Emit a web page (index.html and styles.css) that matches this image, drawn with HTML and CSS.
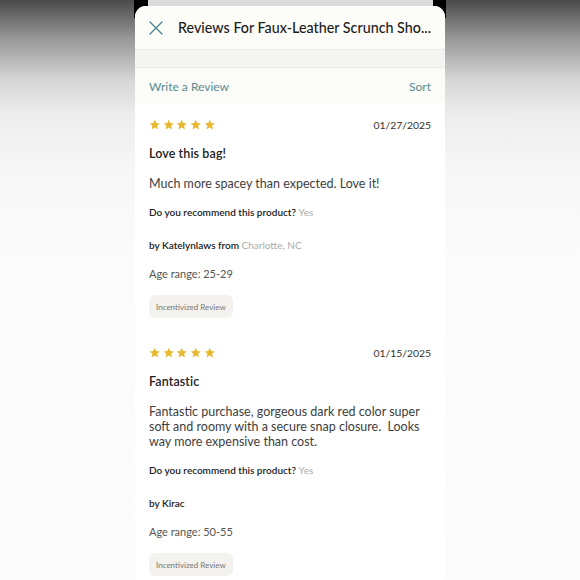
FILE: index.html
```html
<!DOCTYPE html>
<html lang="en">
<head>
<meta charset="utf-8">
<title>Reviews</title>
<link rel="stylesheet" href="styles.css">
</head>
<body>
<div class="device">
  <div class="notch"><div class="notch-card"></div></div>
  <div class="sheet">
    <header class="sheet-header">
      <svg class="close" viewBox="0 0 14 14" width="14" height="14" aria-hidden="true">
        <path d="M1 1 L13 13 M13 1 L1 13" stroke="#4f8790" stroke-width="1.4" fill="none" stroke-linecap="round"/>
      </svg>
      <h1 class="sheet-title">Reviews For Faux-Leather Scrunch Sho...</h1>
    </header>
    <div class="band"></div>
    <div class="toolbar">
      <span class="link">Write a Review</span>
      <span class="link">Sort</span>
    </div>

    <article class="review">
      <div class="review-top">
        <div class="stars">
          <svg viewBox="0 0 24 24"><path d="M12 1.5l3.1 7.1 7.6.6-5.8 5 1.8 7.5L12 17.7l-6.7 4 1.8-7.5-5.8-5 7.6-.6z"/></svg>
          <svg viewBox="0 0 24 24"><path d="M12 1.5l3.1 7.1 7.6.6-5.8 5 1.8 7.5L12 17.7l-6.7 4 1.8-7.5-5.8-5 7.6-.6z"/></svg>
          <svg viewBox="0 0 24 24"><path d="M12 1.5l3.1 7.1 7.6.6-5.8 5 1.8 7.5L12 17.7l-6.7 4 1.8-7.5-5.8-5 7.6-.6z"/></svg>
          <svg viewBox="0 0 24 24"><path d="M12 1.5l3.1 7.1 7.6.6-5.8 5 1.8 7.5L12 17.7l-6.7 4 1.8-7.5-5.8-5 7.6-.6z"/></svg>
          <svg viewBox="0 0 24 24"><path d="M12 1.5l3.1 7.1 7.6.6-5.8 5 1.8 7.5L12 17.7l-6.7 4 1.8-7.5-5.8-5 7.6-.6z"/></svg>
        </div>
        <span class="date">01/27/2025</span>
      </div>
      <h2 class="review-title">Love this bag!</h2>
      <p class="review-body">Much more spacey than expected. Love it!</p>
      <p class="recommend">Do you recommend this product? <span class="muted">Yes</span></p>
      <p class="author">by Katelynlaws from <span class="muted">Charlotte, NC</span></p>
      <p class="age">Age range: 25-29</p>
      <span class="badge">Incentivized Review</span>
    </article>

    <article class="review">
      <div class="review-top">
        <div class="stars">
          <svg viewBox="0 0 24 24"><path d="M12 1.5l3.1 7.1 7.6.6-5.8 5 1.8 7.5L12 17.7l-6.7 4 1.8-7.5-5.8-5 7.6-.6z"/></svg>
          <svg viewBox="0 0 24 24"><path d="M12 1.5l3.1 7.1 7.6.6-5.8 5 1.8 7.5L12 17.7l-6.7 4 1.8-7.5-5.8-5 7.6-.6z"/></svg>
          <svg viewBox="0 0 24 24"><path d="M12 1.5l3.1 7.1 7.6.6-5.8 5 1.8 7.5L12 17.7l-6.7 4 1.8-7.5-5.8-5 7.6-.6z"/></svg>
          <svg viewBox="0 0 24 24"><path d="M12 1.5l3.1 7.1 7.6.6-5.8 5 1.8 7.5L12 17.7l-6.7 4 1.8-7.5-5.8-5 7.6-.6z"/></svg>
          <svg viewBox="0 0 24 24"><path d="M12 1.5l3.1 7.1 7.6.6-5.8 5 1.8 7.5L12 17.7l-6.7 4 1.8-7.5-5.8-5 7.6-.6z"/></svg>
        </div>
        <span class="date">01/15/2025</span>
      </div>
      <h2 class="review-title">Fantastic</h2>
      <p class="review-body">Fantastic purchase, gorgeous dark red color super soft and roomy with a secure snap closure.&nbsp; Looks way more expensive than cost.</p>
      <p class="recommend">Do you recommend this product? <span class="muted">Yes</span></p>
      <p class="author">by Kirac</p>
      <p class="age">Age range: 50-55</p>
      <span class="badge">Incentivized Review</span>
    </article>
  </div>
</div>
</body>
</html>
```

FILE: styles.css
```css
* { box-sizing: border-box; }

html, body {
  margin: 0;
  padding: 0;
  height: 100%;
}

body {
  font-family: "Lato", "Noto Sans", sans-serif;
  background: linear-gradient(180deg, #4a4a4a 0px, #9a9a9a 40px, #d6d6d6 80px, #ededed 115px, #f7f7f7 170px, #fbfbfb 260px, #fcfcfc 100%);
  display: flex;
  justify-content: center;
  overflow: hidden;
}

.device {
  width: 312px;
  height: 580px;
  background: linear-gradient(180deg, #000 0 18px, transparent 18px);
  display: flex;
  flex-direction: column;
}

.notch {
  height: 6px;
  padding: 0 13px 0 14px;
}

.notch-card {
  height: 100%;
  background: #dcdcdc;
}

.sheet {
  flex: 1;
  margin: 0 1px;
  background: #ffffff;
  border-radius: 11px 11px 0 0;
  overflow: hidden;
}

.sheet-header {
  height: 44px;
  background: #fcfcf9;
  border-bottom: 1px solid #ececea;
  display: flex;
  align-items: center;
  padding: 0 14px;
  gap: 15px;
}

.close {
  flex: none;
  margin-top: 1px;
}

.sheet-title {
  margin: 0;
  font-size: 14.3px;
  font-weight: 500;
  color: #1c1c1c;
  letter-spacing: 0;
  white-space: nowrap;
}

.band {
  height: 18px;
  background: #f4f4f2;
  border-bottom: 1px solid #ebebe8;
}

.toolbar {
  height: 35px;
  background: #fbfbf7;
  display: flex;
  justify-content: space-between;
  align-items: center;
  padding: 0 14px;
  padding-top: 1px;
}

.link {
  color: #5a8b93;
  font-size: 12px;
}

.review {
  padding: 15px 14px 13px 14px;
  display: flex;
  flex-direction: column;
  align-items: flex-start;
}

.review-top {
  align-self: stretch;
  display: flex;
  justify-content: space-between;
  align-items: center;
  height: 14px;
}

.stars {
  display: flex;
  gap: 2.2px;
}

.stars svg {
  width: 11.5px;
  height: 11.5px;
  fill: #e8b830;
}

.date {
  font-size: 10.4px;
  color: #333;
}

.review-title {
  margin: 14px 0 0;
  font-size: 12.5px;
  line-height: 16px;
  font-weight: 600;
  color: #222;
  letter-spacing: 0.1px;
}

.review-body {
  margin: 14px 0 0;
  font-size: 12.5px;
  line-height: 15px;
  color: #3e3e3e;
}

.recommend {
  margin: 14px 0 0;
  font-size: 10px;
  line-height: 14px;
  font-weight: 600;
  color: #222;
}

.author {
  margin: 19px 0 0;
  font-size: 10px;
  line-height: 14px;
  font-weight: 600;
  color: #222;
}

.muted {
  color: #aaaaaa;
  font-weight: 400;
}

.age {
  margin: 15px 0 0;
  font-size: 11px;
  line-height: 14px;
  color: #555;
}

.badge {
  margin-top: 14px;
  height: 23px;
  padding: 0 7px;
  display: inline-flex;
  align-items: center;
  background: #f3f2ee;
  border-radius: 6px;
  font-size: 8px;
  color: #777;
}
```
